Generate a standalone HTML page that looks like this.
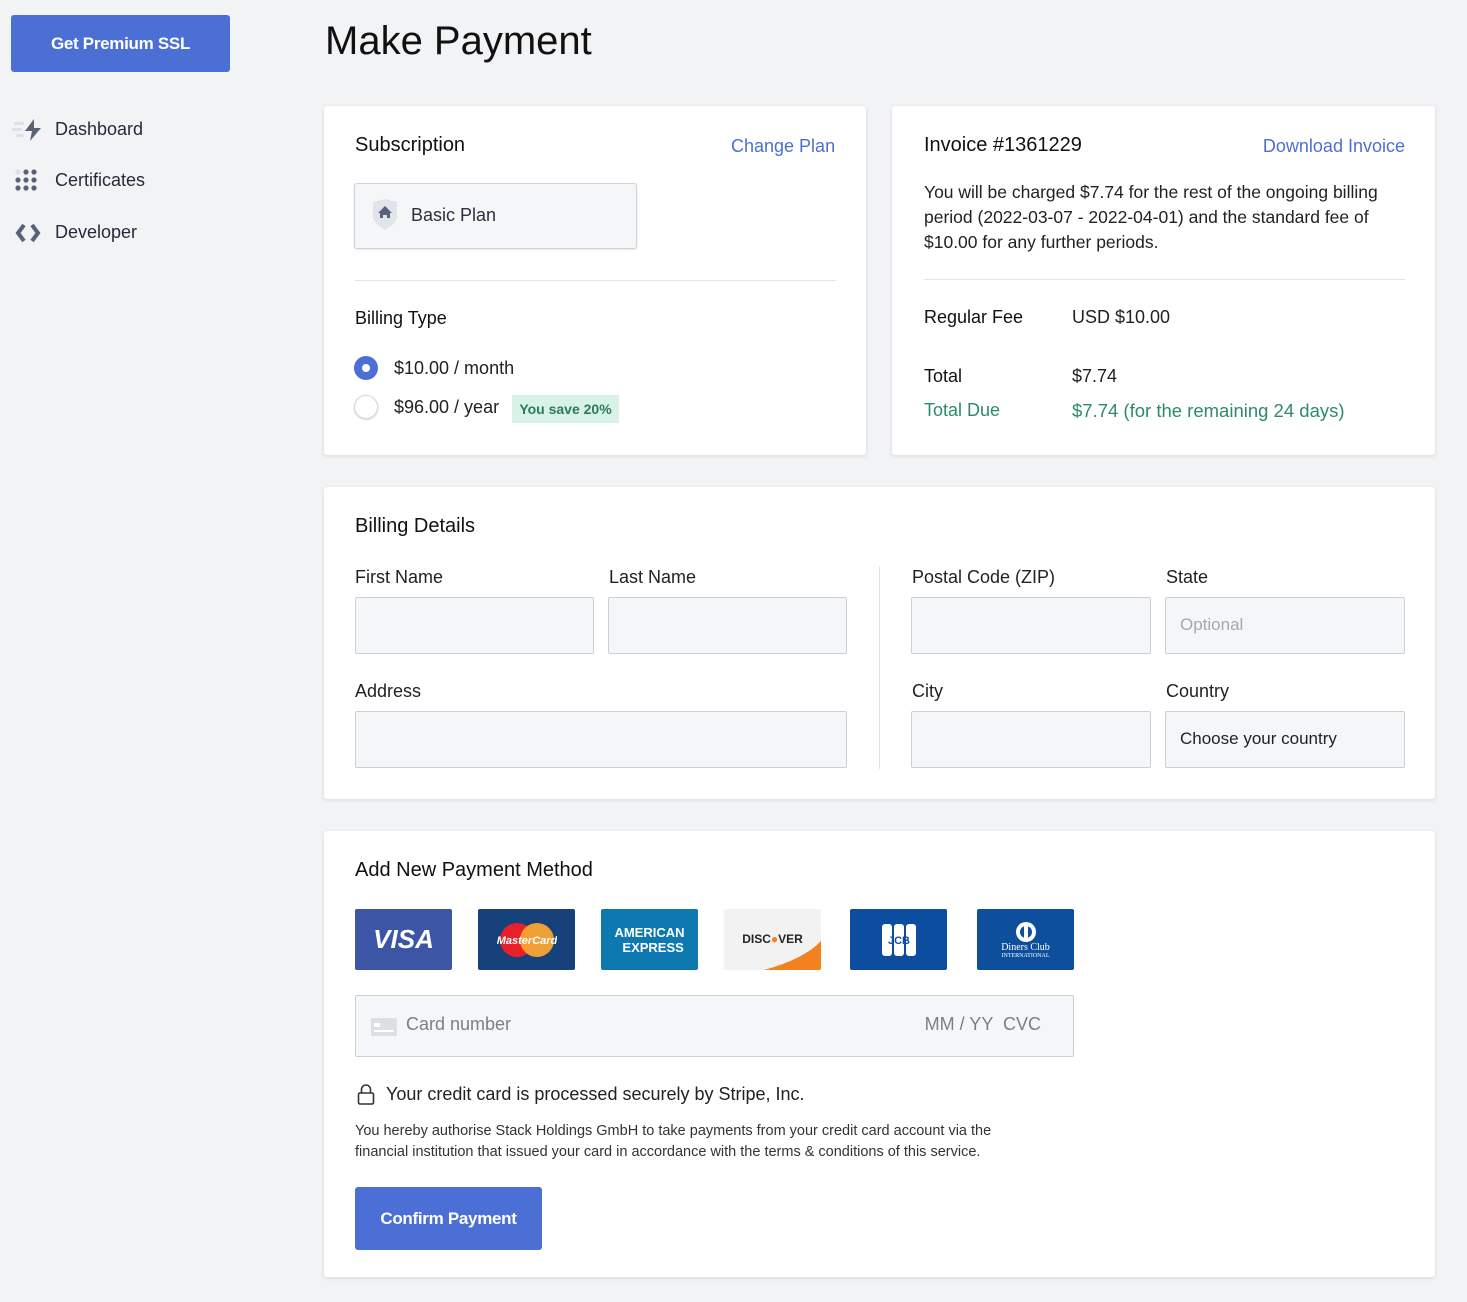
<!DOCTYPE html>
<html><head><meta charset="utf-8"><style>
*{box-sizing:border-box;margin:0;padding:0}
body{width:1467px;height:1302px;background:#f2f3f5;font-family:"Liberation Sans",sans-serif;color:#1c2130;position:relative;overflow:hidden}
.a{position:absolute}
.card{position:absolute;background:#fff;border-radius:3px;box-shadow:0 1px 4px rgba(0,0,0,.12)}
.btn{background:#4c6fd6;color:#fff;font-weight:bold;border-radius:3px;display:flex;align-items:center;justify-content:center;letter-spacing:-.3px}
.nav{font-size:18px;color:#232a3b}
.h{font-size:20px;color:#111}
.lnk{color:#4c6fd6;font-size:18px}
.t{font-size:17px;color:#222}
.inp{position:absolute;background:#f5f6f8;border:1px solid #ccd0d6;border-radius:2px;height:57px}
.card-logo{position:absolute;top:909px;width:97px;height:61px;border-radius:2px;display:flex;align-items:center;justify-content:center;font-weight:bold;color:#fff}
</style></head><body>
<div class="a btn" style="left:11px;top:15px;width:219px;height:57px;font-size:17px">Get Premium SSL</div>
<svg class="a" style="left:12px;top:118px" width="30" height="24"><rect x="2" y="4" width="10" height="3" rx="1.5" fill="#dde0e6"/><rect x="0" y="10" width="10" height="3" rx="1.5" fill="#dde0e6"/><rect x="4" y="16" width="8" height="3" rx="1.5" fill="#dde0e6"/><path d="M22 1 L13 13 H20 L18 23 L29 10 H22 Z" fill="#5a627a"/></svg>
<div class="a nav" style="left:55px;top:119px">Dashboard</div>
<svg class="a" style="left:15px;top:169px" width="24" height="24"><g fill="#5a627a"><circle cx="3" cy="3" r="2.6" fill="#dde0e6"/><circle cx="11" cy="3" r="2.6"/><circle cx="19" cy="3" r="2.6"/><circle cx="3" cy="11" r="2.6"/><circle cx="11" cy="11" r="2.6"/><circle cx="19" cy="11" r="2.6"/><circle cx="3" cy="19" r="2.6"/><circle cx="11" cy="19" r="2.6"/><circle cx="19" cy="19" r="2.6"/></g></svg>
<div class="a nav" style="left:55px;top:170px">Certificates</div>
<svg class="a" style="left:15px;top:222px" width="26" height="22"><path d="M9 3 L3 11 L9 19" stroke="#5a627a" stroke-width="4" fill="none"/><path d="M17 3 L23 11 L17 19" stroke="#5a627a" stroke-width="4" fill="none"/></svg>
<div class="a nav" style="left:55px;top:222px">Developer</div>

<div class="a" style="left:325px;top:19px;font-size:40px;color:#111">Make Payment</div>

<div class="card" style="left:324px;top:106px;width:542px;height:349px"></div>
<div class="a h" style="left:355px;top:134px">Subscription</div>
<div class="a lnk" style="left:731px;top:136px">Change Plan</div>
<div class="a" style="left:354px;top:183px;width:283px;height:66px;background:#f5f6f8;border:1px solid #cfd3d9;border-radius:3px;box-shadow:0 1px 2px rgba(0,0,0,.1)"></div>
<svg class="a" style="left:372px;top:199px" width="28" height="32"><path d="M1 3 L13 0 L25 3 V17 C25 24 18 28 13 31 C8 28 1 24 1 17 Z" fill="#e1e4ea"/><path d="M13 7 L6 14 H8 V19 H11 V16 H15 V19 H18 V14 H20 Z" fill="#5a627a"/></svg>
<div class="a t" style="left:411px;top:205px;font-size:18px;color:#2a3040">Basic Plan</div>
<div class="a" style="left:355px;top:280px;width:481px;height:1px;background:#dfe2e6"></div>
<div class="a h" style="left:355px;top:308px;font-size:18px">Billing Type</div>
<div class="a" style="left:354px;top:356px;width:24px;height:24px;border-radius:50%;background:#4c6fd6"><div style="margin:8px;width:8px;height:8px;border-radius:50%;background:#fff"></div></div>
<div class="a t" style="left:394px;top:358px;font-size:18px">$10.00 / month</div>
<div class="a" style="left:354px;top:395px;width:24px;height:24px;border-radius:50%;background:#fff;border:1px solid #d3d6db;box-shadow:0 1px 2px rgba(0,0,0,.15)"></div>
<div class="a t" style="left:394px;top:397px;font-size:18px">$96.00 / year</div>
<div class="a" style="left:512px;top:395px;width:107px;height:28px;background:#d8f2e8;color:#2d7a58;font-size:14px;font-weight:bold;display:flex;align-items:center;justify-content:center">You save 20%</div>

<div class="card" style="left:892px;top:106px;width:543px;height:349px"></div>
<div class="a h" style="left:924px;top:134px">Invoice #1361229</div>
<div class="a lnk" style="right:62px;top:136px">Download Invoice</div>
<div class="a t" style="left:924px;top:180px;width:486px;line-height:25px;font-size:17.5px">You will be charged $7.74 for the rest of the ongoing billing period (2022-03-07 - 2022-04-01) and the standard fee of $10.00 for any further periods.</div>
<div class="a" style="left:924px;top:279px;width:481px;height:1px;background:#dfe2e6"></div>
<div class="a t" style="left:924px;top:307px;font-size:18px;color:#111">Regular Fee</div>
<div class="a t" style="left:1072px;top:307px;font-size:18px">USD $10.00</div>
<div class="a t" style="left:924px;top:366px;font-size:18px;color:#111">Total</div>
<div class="a t" style="left:1072px;top:366px;font-size:18px">$7.74</div>
<div class="a" style="left:924px;top:400px;font-size:18px;color:#2e8b66">Total Due</div>
<div class="a" style="left:1072px;top:400px;font-size:18.5px;color:#2e8b66">$7.74 (for the remaining 24 days)</div>

<div class="card" style="left:324px;top:487px;width:1111px;height:312px"></div>
<div class="a h" style="left:355px;top:515px">Billing Details</div>
<div class="a t" style="left:355px;top:567px;font-size:18px">First Name</div>
<div class="a t" style="left:609px;top:567px;font-size:18px">Last Name</div>
<div class="a t" style="left:912px;top:567px;font-size:18px">Postal Code (ZIP)</div>
<div class="a t" style="left:1166px;top:567px;font-size:18px">State</div>
<div class="inp" style="left:355px;top:597px;width:239px"></div>
<div class="inp" style="left:608px;top:597px;width:239px"></div>
<div class="inp" style="left:911px;top:597px;width:240px"></div>
<div class="inp" style="left:1165px;top:597px;width:240px"><span style="position:absolute;left:14px;top:17px;color:#a4a8af;font-size:17px">Optional</span></div>
<div class="a" style="left:879px;top:566px;width:1px;height:203px;background:#dfe2e6"></div>
<div class="a t" style="left:355px;top:681px;font-size:18px">Address</div>
<div class="a t" style="left:912px;top:681px;font-size:18px">City</div>
<div class="a t" style="left:1166px;top:681px;font-size:18px">Country</div>
<div class="inp" style="left:355px;top:711px;width:492px"></div>
<div class="inp" style="left:911px;top:711px;width:240px"></div>
<div class="inp" style="left:1165px;top:711px;width:240px"><span style="position:absolute;left:14px;top:17px;color:#222;font-size:17px">Choose your country</span></div>

<div class="card" style="left:324px;top:831px;width:1111px;height:446px"></div>
<div class="a h" style="left:355px;top:859px">Add New Payment Method</div>
<div class="card-logo" style="left:355px;background:#3c55a5;font-size:26px;font-style:italic">VISA</div>
<div class="card-logo" style="left:478px;background:#17417a"><svg width="60" height="40"><circle cx="20" cy="20" r="17" fill="#e9202a"/><circle cx="40" cy="20" r="17" fill="#f8a533" opacity=".95"/><text x="30" y="24" font-size="11" font-weight="bold" fill="#fff" text-anchor="middle" font-style="italic" font-family="Liberation Sans">MasterCard</text></svg></div>
<div class="card-logo" style="left:601px;background:#0d79b0;font-size:13px;line-height:15px;text-align:center">AMERICAN<br>&nbsp;&nbsp;EXPRESS</div>
<div class="card-logo" style="left:724px;background:#f1f2f1;color:#222;font-size:12px;overflow:hidden"><svg class="a" style="left:0;top:0" width="97" height="61"><path d="M40 61 Q80 50 97 32 V61 Z" fill="#f48120"/></svg><span style="position:relative;top:-1px">DISC<span style="color:#f48120">●</span>VER</span></div>
<div class="card-logo" style="left:850px;background:#0d4da0"><svg width="36" height="36"><rect x="1" y="2" width="10" height="32" rx="3" fill="#fff"/><rect x="13" y="2" width="10" height="32" rx="3" fill="#fff"/><rect x="25" y="2" width="10" height="32" rx="3" fill="#fff"/><text x="18" y="22" font-size="11" font-weight="bold" fill="#0d4da0" text-anchor="middle" font-family="Liberation Sans">JCB</text></svg></div>
<div class="card-logo" style="left:977px;background:#0d4f9c;flex-direction:column;font-weight:normal;font-family:'Liberation Serif',serif"><svg width="26" height="22"><circle cx="13" cy="11" r="10" fill="#fff"/><circle cx="13" cy="11" r="6" fill="#0d4f9c"/><rect x="11" y="4" width="4" height="14" fill="#fff"/></svg><div style="font-size:10px;line-height:10px">Diners Club</div><div style="font-size:6px">INTERNATIONAL</div></div>
<div class="inp" style="left:355px;top:995px;width:719px;height:62px"><svg class="a" style="left:15px;top:22px" width="26" height="18"><rect width="26" height="18" rx="2" fill="#dcdfe4"/><rect x="3" y="5" width="6" height="4" fill="#fff"/><rect x="3" y="12" width="20" height="2" fill="#fff"/></svg><span style="position:absolute;left:50px;top:18px;font-size:18px;color:#7a7f87">Card number</span><span style="position:absolute;right:32px;top:18px;font-size:18px;color:#7a7f87">MM / YY &nbsp;CVC</span></div>
<svg class="a" style="left:357px;top:1083px" width="18" height="22"><path d="M4.5 10 V6.5 A4.5 4.5 0 0 1 13.5 6.5 V10" stroke="#333" stroke-width="1.6" fill="none"/><rect x="1.5" y="10" width="15" height="11" rx="1.5" stroke="#333" stroke-width="1.6" fill="none"/></svg>
<div class="a t" style="left:386px;top:1084px;font-size:18px">Your credit card is processed securely by Stripe, Inc.</div>
<div class="a" style="left:355px;top:1121px;font-size:14.5px;line-height:21px;color:#333;width:680px">You hereby authorise Stack Holdings GmbH to take payments from your credit card account via the financial institution that issued your card in accordance with the terms &amp; conditions of this service.</div>
<div class="a btn" style="left:355px;top:1187px;width:187px;height:63px;font-size:17px">Confirm Payment</div>
</body></html>
